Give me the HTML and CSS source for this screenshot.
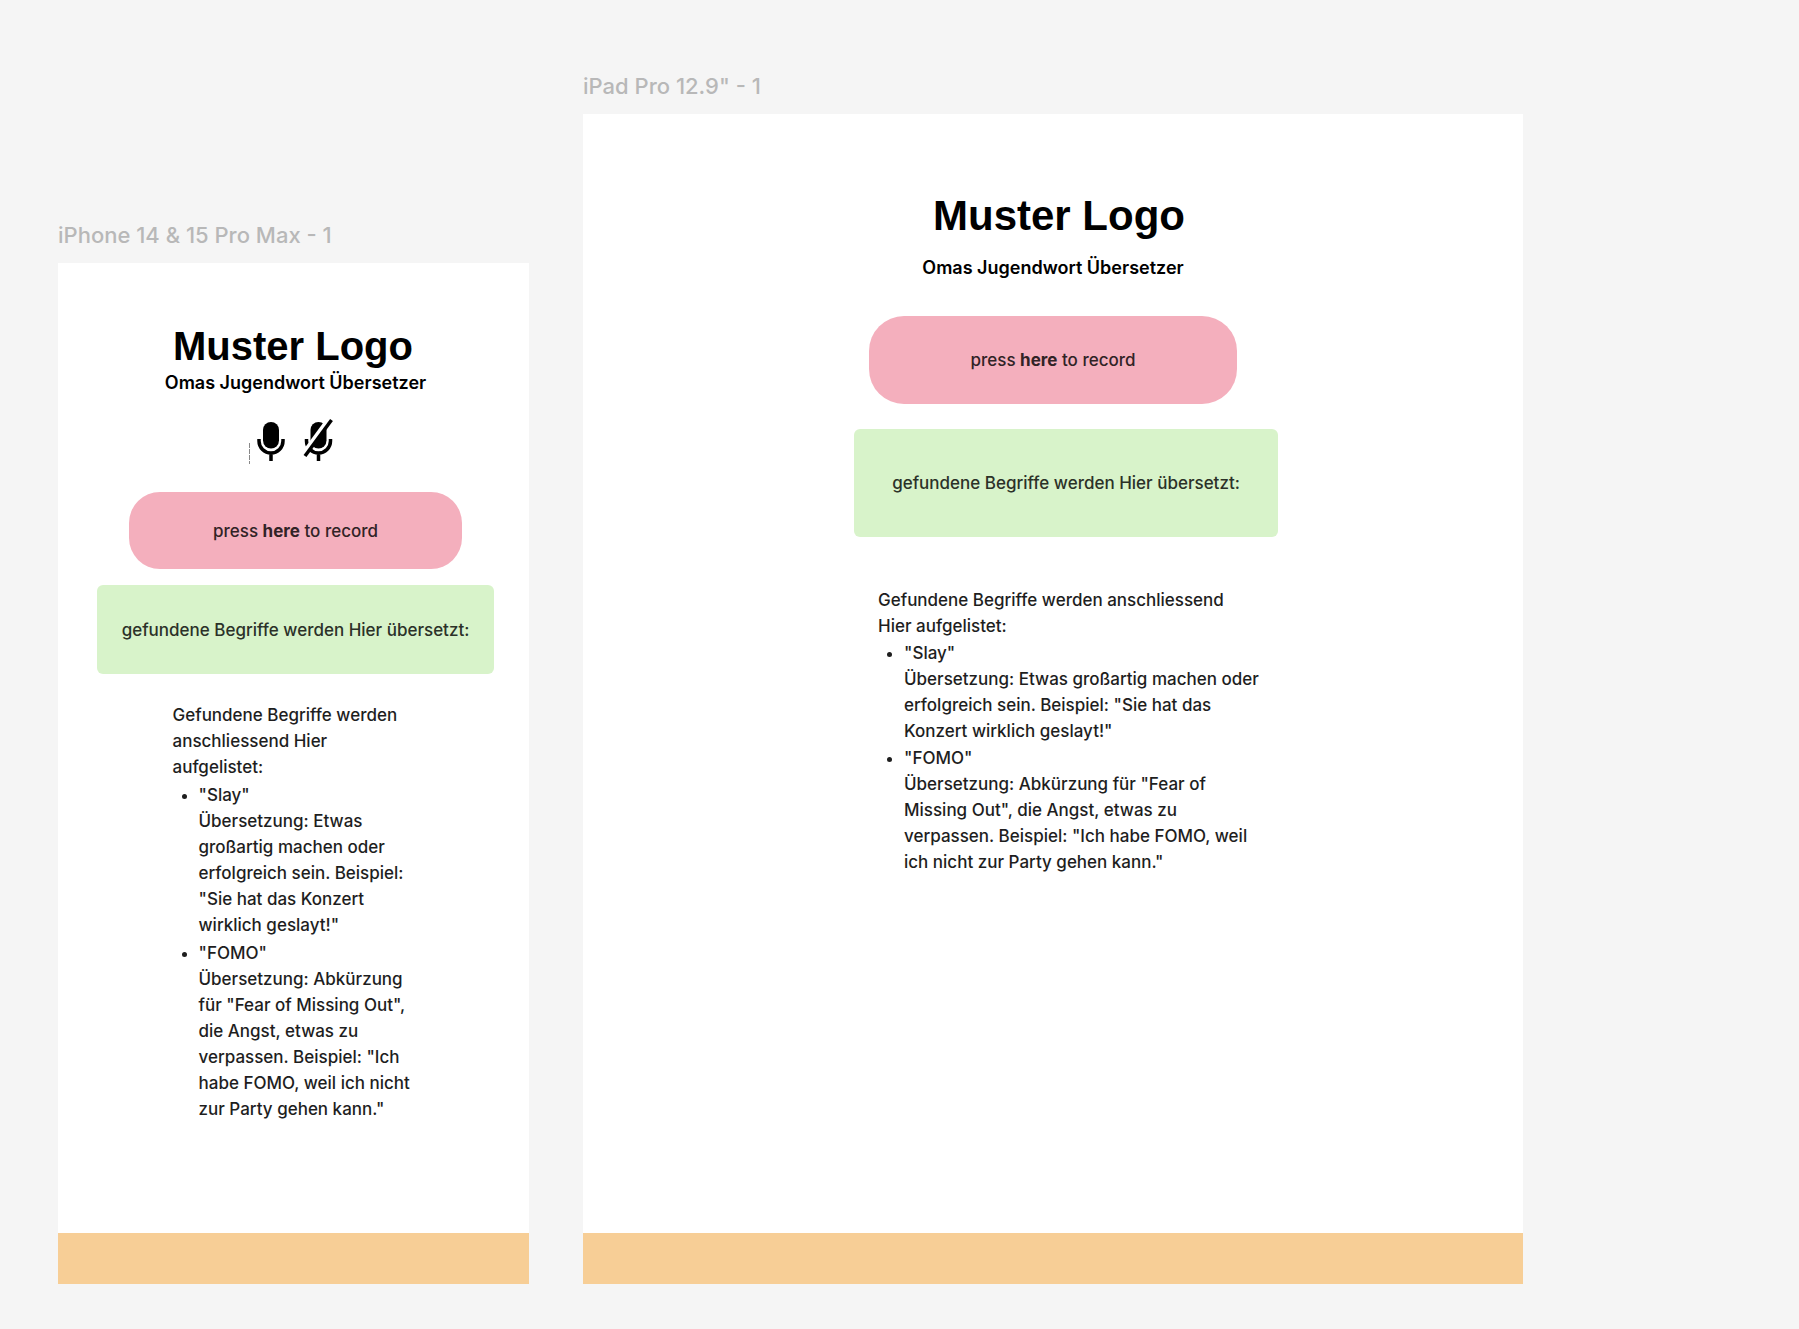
FILE: index.html
```html
<!DOCTYPE html>
<html lang="de">
<head>
  <meta charset="utf-8">
  <meta name="viewport" content="width=device-width, initial-scale=1">
  <title>Omas Jugendwort Übersetzer</title>
  <link rel="stylesheet" href="styles.css">
</head>
<body>
  <main class="canvas">
    <section class="board board-phone">
      <h2 class="board-label">iPhone 14 &amp; 15 Pro Max - 1</h2>
      <div class="frame">
        <div class="content">
          <h1 class="logo">Muster Logo</h1>
          <p class="subtitle">Omas Jugendwort Übersetzer</p>
          <svg class="mics" width="94" height="50" viewBox="0 0 94 50" role="img" aria-label="Mikrofon an, Mikrofon aus">
            <path d="M.500 27V48" fill="none" stroke="#888" stroke-width="1" stroke-dasharray="5 1"/>
            <g id="mic">
              <rect x="14" y="6" width="16" height="26.500" rx="8"/>
              <path d="M10 23V25A12 12 0 0 0 34 25V23M22 37V45" fill="none" stroke="#000" stroke-width="3.500"/>
            </g>
            <use href="#mic" x="47.500"/>
            <path d="M54 38.500L80.500 2.500" fill="none" stroke="#fff" stroke-width="5"/>
            <path d="M56 40L82.500 4" fill="none" stroke="#000" stroke-width="3.500"/>
          </svg>
          <button class="record" type="button"><span>press <b>here</b> to record</span></button>
          <p class="result">gefundene Begriffe werden Hier übersetzt:</p>
          <div class="terms">
            <p>Gefundene Begriffe werden anschliessend Hier aufgelistet:</p>
            <ul>
              <li>"Slay"<br>Übersetzung: Etwas großartig machen oder erfolgreich sein. Beispiel: "Sie hat das Konzert wirklich geslayt!"</li>
              <li>"FOMO"<br>Übersetzung: Abkürzung für "Fear of Missing Out", die Angst, etwas zu verpassen. Beispiel: "Ich habe FOMO, weil ich nicht zur Party gehen kann."</li>
            </ul>
          </div>
        </div>
        <footer class="bar"></footer>
      </div>
    </section>

    <section class="board board-tablet">
      <h2 class="board-label">iPad Pro 12.9" - 1</h2>
      <div class="frame">
        <div class="content">
          <h1 class="logo">Muster Logo</h1>
          <p class="subtitle">Omas Jugendwort Übersetzer</p>
          <button class="record" type="button"><span>press <b>here</b> to record</span></button>
          <p class="result">gefundene Begriffe werden Hier übersetzt:</p>
          <div class="terms">
            <p>Gefundene Begriffe werden anschliessend Hier aufgelistet:</p>
            <ul>
              <li>"Slay"<br>Übersetzung: Etwas großartig machen oder erfolgreich sein. Beispiel: "Sie hat das Konzert wirklich geslayt!"</li>
              <li>"FOMO"<br>Übersetzung: Abkürzung für "Fear of Missing Out", die Angst, etwas zu verpassen. Beispiel: "Ich habe FOMO, weil ich nicht zur Party gehen kann."</li>
            </ul>
          </div>
        </div>
        <footer class="bar"></footer>
      </div>
    </section>
  </main>
</body>
</html>
```
FILE: styles.css
```css
* {
  box-sizing: border-box;
}

body,
h1,
h2,
p,
ul {
  margin: 0;
}

body {
  background: #f5f5f5;
  color: #1e1e1e;
  font: 500 17px/26px Inter, "Liberation Sans", sans-serif;
}

.canvas {
  display: grid;
  grid-template-columns: minmax(420px, 471fr) minmax(460px, 940fr);
  column-gap: 54px;
  min-height: 100vh;
  padding: 72px 276px 45px 58px;
}

.board {
  display: flex;
  flex-direction: column;
}

.board-phone {
  margin-top: 149px;
}

.board-label {
  margin-bottom: 14px;
  color: #b8b8b8;
  font-size: 22px;
  font-weight: 500;
  line-height: 28px;
}

.frame {
  display: flex;
  flex: 1;
  flex-direction: column;
  background: #fff;
}

.content {
  display: flex;
  flex: 1;
  flex-direction: column;
  align-items: center;
  padding-bottom: 40px;
}

.bar {
  height: 51px;
  background: #f7ce96;
}

.logo {
  color: #000;
  font-family: "Liberation Sans", Arial, sans-serif;
  font-weight: 700;
}

.subtitle {
  color: #000;
  font-size: 18px;
  font-weight: 600;
}

.record {
  border: 0;
  background: #f4afbd;
  color: #312326;
  font: inherit;
}

.result {
  display: grid;
  place-items: center;
  border-radius: 6px;
  background: #d8f3ca;
  color: #2b3128;
}

.terms ul {
  padding-left: 26px;
}

/* Phone */
.board-phone .content {
  padding-top: 60px;
  padding-left: 4px;
}

.board-phone .logo {
  margin: 0 5px 1px 0;
  font-size: 40px;
  line-height: 46px;
}

.mics {
  margin: 20px 0 26px;
}

.board-phone .record {
  width: 333px;
  height: 77px;
  border-radius: 31px;
}

.board-phone .result {
  width: 397px;
  height: 89px;
  margin-top: 16px;
}

.board-phone .terms {
  width: 246px;
  margin-top: 28px;
}

.board-phone .terms li {
  margin-top: 2px;
}

/* Tablet */
.board-tablet .content {
  padding-top: 78px;
}

.board-tablet .logo {
  margin-left: 12px;
  font-size: 42px;
  line-height: 48px;
}

.board-tablet .subtitle {
  margin: 15px 0 35px;
}

.board-tablet .record {
  width: 368px;
  height: 88px;
  border-radius: 35px;
}

.board-tablet .result {
  width: 424px;
  height: 108px;
  margin: 25px 0 0 26px;
}

.board-tablet .terms {
  width: 386px;
  margin: 50px 0 0 36px;
}

.board-tablet .terms p {
  max-width: 360px;
}

.board-tablet .terms li {
  margin-top: 1px;
}
```
